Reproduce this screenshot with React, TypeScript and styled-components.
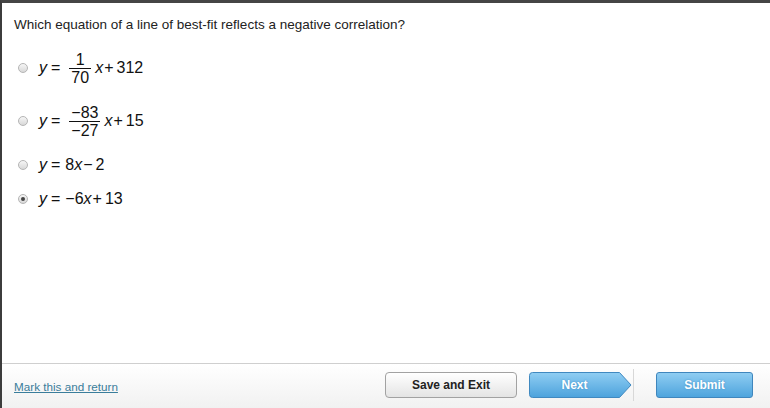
import React from "react";
import styled, { createGlobalStyle } from "styled-components";

const Global = createGlobalStyle`
  html, body { margin: 0; padding: 0; background: #fff; }
  body { font-family: "Liberation Sans", Arial, sans-serif; }
`;

const Frame = styled.div`
  width: 770px;
  height: 408px;
  box-sizing: border-box;
  border-top: 3px solid #454545;
  border-left: 2px solid #3c3c3c;
  display: flex;
  flex-direction: column;
  background: #fff;
`;

const Content = styled.div`
  flex: 1;
  padding: 14px 0 0 12px;
`;

const Question = styled.div`
  font-size: 13.5px;
  line-height: 16px;
  color: #222;
`;

const Options = styled.div`
  display: flex;
  flex-direction: column;
  gap: 16px;
  margin-top: 18px;
`;

const Row = styled.div<{ $h: number; $mt?: number }>`
  display: flex;
  align-items: center;
  height: ${(p) => p.$h}px;
  margin-top: ${(p) => p.$mt ?? 0}px;
`;

const Radio = styled.span<{ $checked?: boolean }>`
  width: 10px;
  height: 10px;
  border-radius: 50%;
  box-sizing: border-box;
  border: 1px solid #b5b5b5;
  background: linear-gradient(#f6f6f6, #d8d8d8);
  margin-left: 4px;
  margin-right: 11px;
  display: flex;
  align-items: center;
  justify-content: center;
  &::after {
    content: "";
    display: ${(p) => (p.$checked ? "block" : "none")};
    width: 4px;
    height: 4px;
    border-radius: 50%;
    background: #444;
  }
`;

const Eq = styled.div`
  display: flex;
  align-items: center;
  font-family: "Liberation Sans", Arial, sans-serif;
  font-size: 16px;
  color: #111;
  line-height: 16px;
`;

const Var = styled.span<{ $mr?: number }>`
  font-style: italic;
  margin-right: ${(p) => p.$mr ?? 0}px;
`;

const Op = styled.span<{ $mr?: number }>`
  margin-right: ${(p) => p.$mr ?? 0}px;
`;

const Frac = styled.span`
  display: inline-flex;
  flex-direction: column;
  align-items: center;
  margin: 0 4px 0 9px;
`;

const Num = styled.span`
  padding: 0 2px 1px;
  line-height: 15px;
`;

const Den = styled.span`
  border-top: 1px solid #111;
  padding: 1px 2px 0;
  line-height: 15px;
  align-self: stretch;
  text-align: center;
`;

const Footer = styled.div`
  height: 45px;
  box-sizing: border-box;
  border-top: 1px solid #cfcfcf;
  background: linear-gradient(#ffffff, #f1f1f1);
  display: flex;
  align-items: center;
  padding: 0 17px 3px 12px;
`;

const Link = styled.a`
  font-size: 11.7px;
  color: #3a7d9b;
  text-decoration: underline;
  cursor: pointer;
  margin-top: 3px;
`;

const SaveButton = styled.button`
  margin-left: auto;
  width: 132px;
  height: 26px;
  border: 1px solid #a2a2a2;
  border-radius: 4px;
  background: linear-gradient(#ffffff, #e4e4e4);
  font-family: "Liberation Sans", Arial, sans-serif;
  font-weight: bold;
  font-size: 12px;
  color: #222;
  padding: 0;
`;

const NextButton = styled.button`
  position: relative;
  margin-left: 12px;
  width: 103px;
  height: 26px;
  border: none;
  background: none;
  padding: 0 12px 0 0;
  font-family: "Liberation Sans", Arial, sans-serif;
  font-weight: bold;
  font-size: 12px;
  color: #fff;
  text-shadow: 0 0 2px #3f8fc5;
`;

const NextShape = styled.svg`
  position: absolute;
  left: 0;
  top: 0;
`;

const NextLabel = styled.span`
  position: relative;
`;

const Divider = styled.span`
  width: 1px;
  height: 32px;
  background: #d8d8d8;
  margin-left: 1px;
`;

const SubmitButton = styled.button`
  margin-left: 22px;
  width: 97px;
  height: 26px;
  border: 1px solid #3f86bd;
  border-radius: 3px;
  background: linear-gradient(#8fcdf2, #4ea4dd);
  font-family: "Liberation Sans", Arial, sans-serif;
  font-weight: bold;
  font-size: 12px;
  color: #fff;
  text-shadow: 0 0 2px #3f8fc5;
  padding: 0;
`;

export default function App() {
  return (
    <>
      <Global />
      <Frame>
        <Content>
          <Question>Which equation of a line of best-fit reflects a negative correlation?</Question>
          <Options>
            <Row $h={34}>
              <Radio />
              <Eq>
                <Var $mr={4}>y</Var>
                <Op>=</Op>
                <Frac>
                  <Num>1</Num>
                  <Den>70</Den>
                </Frac>
                <Var $mr={1}>x</Var>
                <Op $mr={3}>+</Op>
                <span>312</span>
              </Eq>
            </Row>
            <Row $h={34} $mt={3}>
              <Radio />
              <Eq>
                <Var $mr={4}>y</Var>
                <Op>=</Op>
                <Frac>
                  <Num>−83</Num>
                  <Den>−27</Den>
                </Frac>
                <Var $mr={1}>x</Var>
                <Op $mr={3}>+</Op>
                <span>15</span>
              </Eq>
            </Row>
            <Row $h={20} $mt={1}>
              <Radio />
              <Eq>
                <Var $mr={4}>y</Var>
                <Op $mr={5}>=</Op>
                <span>8</span>
                <Var $mr={1}>x</Var>
                <Op $mr={3}>−</Op>
                <span>2</span>
              </Eq>
            </Row>
            <Row $h={20} $mt={-2}>
              <Radio $checked />
              <Eq>
                <Var $mr={4}>y</Var>
                <Op $mr={5}>=</Op>
                <Op>−</Op>
                <span>6</span>
                <Var $mr={1}>x</Var>
                <Op $mr={3}>+</Op>
                <span>13</span>
              </Eq>
            </Row>
          </Options>
        </Content>
        <Footer>
          <Link>Mark this and return</Link>
          <SaveButton>Save and Exit</SaveButton>
          <NextButton>
            <NextShape width="103" height="26" viewBox="0 0 103 26">
              <defs>
                <linearGradient id="ng" x1="0" y1="0" x2="0" y2="1">
                  <stop offset="0" stopColor="#90cef3" />
                  <stop offset="1" stopColor="#4ca2dc" />
                </linearGradient>
              </defs>
              <path
                d="M3.5 0.5 H90.5 L102 13 L90.5 25.5 H3.5 Q0.5 25.5 0.5 22.5 V3.5 Q0.5 0.5 3.5 0.5 Z"
                fill="url(#ng)"
                stroke="#4089c0"
                strokeWidth="1"
              />
            </NextShape>
            <NextLabel>Next</NextLabel>
          </NextButton>
          <Divider />
          <SubmitButton>Submit</SubmitButton>
        </Footer>
      </Frame>
    </>
  );
}
